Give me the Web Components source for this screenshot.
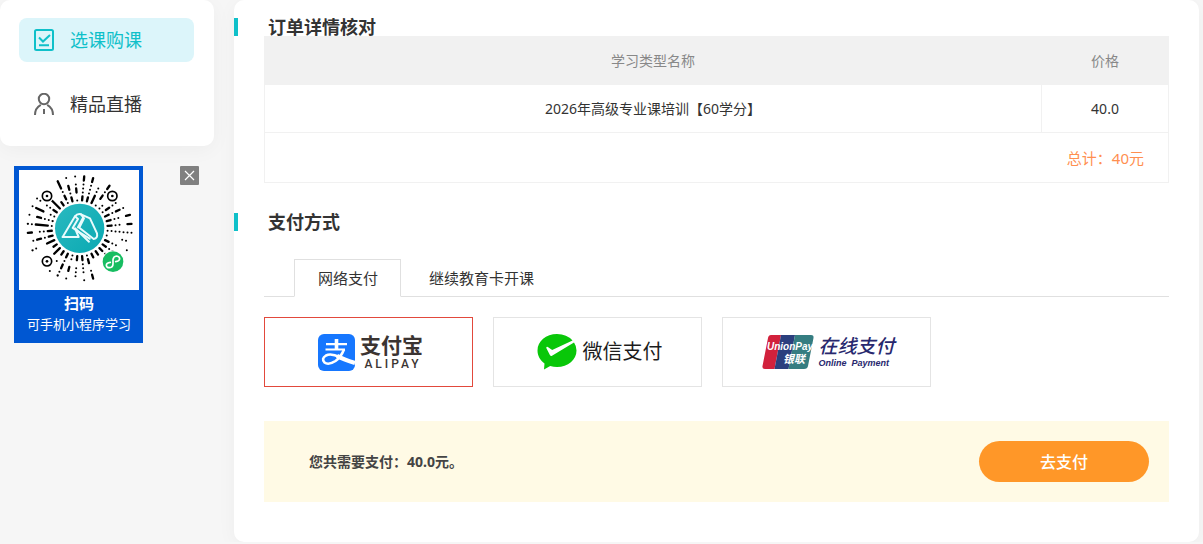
<!DOCTYPE html>
<html lang="zh-CN">
<head>
<meta charset="utf-8">
<meta name="viewport" content="width=device-width, initial-scale=1">
<title>订单详情核对</title>
<style>
  body {
    margin: 0;
    background: #f6f6f6;
    color: #333;
    font: 14px/20px "Noto Sans", "Noto Sans CJK SC", sans-serif;
    --teal: #0fc0c9;
    --line: #f1f1f1;
  }
</style>
</head>
<body>
<order-page></order-page>

<script>
const define = (name, html, setup) => {
  const template = document.createElement('template');
  template.innerHTML = html;
  customElements.define(name, class extends HTMLElement {
    constructor() {
      super();
      this.attachShadow({ mode: 'open' }).append(template.content.cloneNode(true));
    }
    connectedCallback() { if (setup) setup(this.shadowRoot, this); }
  });
};

/* Sidebar */
define('nav-item', `
<style>
  :host { display: block; }
  a { display: flex; align-items: center; gap: 16px; height: 44px; padding: 0 15px; border-radius: 8px; color: #333; font-size: 18px; text-decoration: none; }
  :host([active]) a { background: #dcf5fa; color: var(--teal); }
  ::slotted(svg) { display: block; flex: none; }
</style>
<a href="#"><slot name="icon"></slot><slot></slot></a>`);

define('side-nav', `
<style>
  :host { display: block; background: #fff; border-radius: 10px; box-shadow: 0 4px 20px rgba(0,0,0,.04); }
  nav { display: grid; gap: 20px; padding: 18px 20px 20px 19px; }
</style>
<nav><slot></slot></nav>`);

/* Mini-program code: one string per ray, clockwise from the top, seven slots outwards */
const RAYS = [
  '--...--', '--...--', '---..  ', '. --.--', '..     ',
  '.--..  ', '--.--. ', '--.. --', '--.. --', '.......',
  '.   .. ', '--..  .', '--.---.', '--.    ', '--     ',
  '--     ', '.-- .--', '--... .', '-- ... ', '.. -- .',
  '--.--.-', '-- .  .', '---    ', '--     ', '---  .-',
  '--.--. ', '--.. --', '.----.-', '-..-- .', '.. ---.',
  '--.. ..', '----.  ', '--     ', '.--.---', '--.-- .',
  '. --. .'
];

define('scan-code', `
<style>
  :host { display: block; }
  svg { display: block; width: 120px; height: 120px; }
</style>
<svg viewBox="57 45 360 360" role="img" aria-label="小程序码">
  <defs><linearGradient id="g" x1="0" y1="0" x2="1" y2="1"><stop offset="0" stop-color="#2ab9c0"/><stop offset="1" stop-color="#0aa9b2"/></linearGradient></defs>
  <rect x="57" y="45" width="360" height="360" fill="#fff"/>
  <g id="rays" stroke="#000" stroke-width="7" stroke-linecap="round"></g>
  <g fill="#fff">
    <circle cx="141" cy="123" r="20"/><circle cx="337" cy="123" r="20"/><circle cx="141" cy="319" r="20"/>
  </g>
  <g fill="#fff" stroke="#000" stroke-width="5">
    <circle cx="141" cy="123" r="14"/><circle cx="337" cy="123" r="14"/><circle cx="141" cy="319" r="14"/>
  </g>
  <circle cx="141" cy="123" r="4"/><circle cx="337" cy="123" r="4"/><circle cx="141" cy="319" r="4"/>
  <circle cx="239" cy="220" r="74" fill="url(#g)"/>
  <g fill="none" stroke="#e9fbfc" stroke-width="6" stroke-linejoin="round" stroke-linecap="round">
    <path d="M188 246L225 184Q232 175 243 178L270 190L291 235Q294 250 281 252L238 218L252 190"/>
    <path d="M188 246H236L225 220L267 260"/>
    <path d="M225 184L234 192L218 219L269 251M243 178L250 187L234 217"/>
  </g>
  <circle cx="339" cy="320" r="34" fill="#fff"/><circle cx="339" cy="320" r="31" fill="#17bd61"/>
  <path d="M331 322Q319 323 319 331Q320 339 329 338Q339 337 339 326V314Q340 304 350 303Q359 304 359 312Q358 319 347 320" fill="none" stroke="#fff" stroke-width="5" stroke-linecap="round"/>
</svg>`, root => {
  const layer = root.getElementById('rays');
  const at = (angle, slot) => {
    const r = 84 + slot * 12;
    return [239 + r * Math.sin(angle), 220 - r * Math.cos(angle)];
  };
  RAYS.forEach((ray, i) => {
    const angle = (5 + i * 10) * Math.PI / 180;
    for (const m of ray.matchAll(/\.|-+/g)) {
      const [x1, y1] = at(angle, m.index);
      const [x2, y2] = at(angle, m.index + m[0].length - 1);
      const line = document.createElementNS('http://www.w3.org/2000/svg', 'path');
      line.setAttribute('d', `M${x1} ${y1}L${x2 + 0.01} ${y2}`);
      if (m[0] === '.') line.setAttribute('stroke-width', 6);
      layer.append(line);
    }
  });
});

define('qr-card', `
<style>
  :host { display: flex; justify-content: space-between; align-items: flex-start; padding: 0 15px 0 14px; }
  figure { margin: 0; padding: 4px 4px 8px 5px; background: #0057d2; color: #fff; text-align: center; }
  figcaption { padding-top: 3px; font-size: 13px; line-height: 21px; }
  strong { display: block; font-size: 15px; }
  button { display: grid; place-items: center; width: 19px; height: 19px; padding: 0; border: 0; border-radius: 1px; background: #808080; }
</style>
<figure>
  <scan-code></scan-code>
  <figcaption><strong>扫码</strong>可手机小程序学习</figcaption>
</figure>
<button type="button" aria-label="关闭"><svg width="11" height="11" viewBox="0 0 11 11" stroke="#fff" stroke-width="1.2"><path d="M1 1l9 9M10 1l-9 9"/></svg></button>`);

/* Main panel */
define('section-title', `
<style>
  :host { display: block; border-left: 4px solid var(--teal); padding-left: 30px; }
  h2 { margin: 0; font-size: 18px; line-height: 18px; font-weight: 700; }
</style>
<h2><slot></slot></h2>`);

define('order-table', `
<style>
  :host { display: block; }
  table { width: 100%; border-collapse: collapse; table-layout: fixed; text-align: center; }
  th, td { box-sizing: border-box; padding: 0; border: 1px solid var(--line); height: 48px; }
  th { background: #f1f1f1; color: #888; font-weight: 400; }
  .price { width: 127px; }
  .total { height: 50px; padding-right: 24px; text-align: right; font-size: 15px; color: #ff8f50; }
</style>
<table>
  <thead><tr><th scope="col">学习类型名称</th><th scope="col" class="price">价格</th></tr></thead>
  <tbody><tr><td>2026年高级专业课培训【60学分】</td><td>40.0</td></tr></tbody>
  <tfoot><tr><td class="total" colspan="2">总计：40元</td></tr></tfoot>
</table>`);

define('pay-tabs', `
<style>
  :host { display: flex; padding-left: 30px; border-bottom: 1px solid #e0e0e0; }
  button { height: 37px; padding: 0 28px; border: 0; background: none; color: #333; font: inherit; font-size: 15px; }
  button[aria-selected=true] { height: 38px; margin-bottom: -1px; padding: 0 22px 0 23px; border: 1px solid #e0e0e0; border-bottom-color: #fff; background: #fff; }
</style>
<button type="button" role="tab" aria-selected="true">网络支付</button>
<button type="button" role="tab" aria-selected="false">继续教育卡开课</button>`,
(root, host) => host.setAttribute('role', 'tablist'));

define('alipay-logo', `
<style>
  :host { display: flex; align-items: center; gap: 5px; color: #3b3432; }
  svg { display: block; }
  span, small { display: block; text-align: center; }
  span { font-size: 21px; line-height: 24px; font-weight: 700; }
  small { padding-left: 3px; font: 500 12px/14px Roboto, sans-serif; letter-spacing: 3px; }
</style>
<svg width="37" height="37" viewBox="0 0 37 37" aria-hidden="true">
  <rect width="37" height="37" rx="6" fill="#1677ff"/>
  <g fill="none" stroke="#fff">
    <path d="M8 10.200H29M7.500 15.500H27" stroke-width="2.200"/>
    <path d="M18.500 5V15" stroke-width="3.600"/>
    <path d="M26 15.500Q23 23 17.500 27Q10.500 31.500 6.500 28.500Q3 24.500 8 21.500Q13 19 22 23.200" stroke-width="2.600"/>
    <path d="M19 21.800Q26 25.500 37 29" stroke-width="4.200"/>
  </g>
</svg>
<div><span>支付宝</span><small>ALIPAY</small></div>`);

define('wechat-logo', `
<style>
  :host { display: flex; align-items: center; gap: 6px; color: #1c1c1c; font-size: 20px; }
  svg { display: block; }
</style>
<svg width="40" height="36" viewBox="0 0 40 36" aria-hidden="true">
  <path d="M20 0C9 0 .5 7.200.5 16.500c0 5.500 3 10 7 13L7 35.500l6.200-3.500q3.300 1 6.800 1c11 0 19.500-7.200 19.500-16.500q0-4.500-2.500-8L15 21.800q-1.200.6-2-.5L9.300 14q0-1.700 1.500-1l4.400 3L35.500 6.600Q30 0 20 0Z" fill="#09c709"/>
</svg>
<span>微信支付</span>`);

define('unionpay-logo', `
<style>
  :host { display: flex; align-items: center; gap: 4px; color: #28286e; }
  svg { display: block; }
  span, small { display: block; font-style: italic; }
  span { font-size: 19px; line-height: 22px; font-weight: 500; }
  small { font: italic 700 9px/13px "Liberation Sans", sans-serif; }
</style>
<svg width="52" height="34" viewBox="0 0 52 34" role="img" aria-label="UnionPay">
  <clipPath id="c"><path d="M9 0H49Q52 0 51.500 3L46 31Q45.500 34 42 34H3Q0 34 .5 31L6 3Q6.500 0 9 0Z"/></clipPath>
  <g clip-path="url(#c)">
    <path d="M0 0H19L12.500 34H0Z" fill="#d2213c"/><path d="M19 0H33L26.500 34H12.500Z" fill="#2b3f7e"/><path d="M33 0H52V34H26.500Z" fill="#357d81"/>
  </g>
  <g fill="#fff" font-weight="700" font-style="italic">
    <text x="5" y="15" font-size="10" font-family="Liberation Sans, sans-serif">UnionPay</text>
    <text x="21" y="28" font-size="11" font-family="Noto Sans CJK SC, sans-serif">银联</text>
  </g>
</svg>
<div><span>在线支付</span><small>Online&nbsp; Payment</small></div>`);

define('pay-methods', `
<style>
  :host { display: block; }
  fieldset { display: flex; flex-wrap: wrap; gap: 20px; margin: 0; padding: 0; border: 0; min-width: 0; }
  label { position: relative; display: grid; place-items: center; box-sizing: border-box; width: 209px; height: 70px; padding-left: 4px; border: 1px solid #e4e4e4; background: #fff; }
  label:has(:checked) { border-color: #e2493c; }
  input { position: absolute; inset: 0; width: 100%; height: 100%; margin: 0; opacity: 0; }
</style>
<fieldset aria-label="支付方式">
  <label><input type="radio" name="method" checked><alipay-logo></alipay-logo></label>
  <label><input type="radio" name="method"><wechat-logo></wechat-logo></label>
  <label><input type="radio" name="method"><unionpay-logo></unionpay-logo></label>
</fieldset>`);

define('pay-bar', `
<style>
  :host { display: flex; align-items: center; justify-content: space-between; padding: 20px 20px 20px 45px; background: #fffae5; color: #444; font-weight: 700; }
  button { width: 170px; height: 41px; border: 0; border-radius: 21px; background: #ff9728; color: #fff; font: inherit; font-size: 16px; font-weight: 500; }
</style>
<span><slot></slot></span>
<button type="button">去支付</button>`);

define('order-page', `
<style>
  :host { display: flex; align-items: flex-start; gap: 20px; padding-right: 4px; }
  aside { flex: none; display: grid; gap: 20px; width: 214px; }
  main { flex: 1; min-width: 0; padding: 18px 0 40px; border-radius: 10px; background: #fff; box-shadow: 0 4px 20px rgba(0,0,0,.04); }
  .body { padding: 0 30px 30px; }
  .body:last-child { padding-top: 28px; padding-bottom: 0; }
  pay-methods { margin: 20px 0 34px; }
</style>
<aside>
  <side-nav>
    <nav-item active>
      <svg slot="icon" width="20" height="22" viewBox="0 0 20 22" fill="none" stroke="currentColor" stroke-width="2"><rect x="1" y="1" width="18" height="20" rx="1.500"/><path d="M5 8.500L9 12.500L16 6M5 16.200H15"/></svg>选课购课</nav-item>
    <nav-item>
      <svg slot="icon" width="20" height="22" viewBox="0 0 20 22" fill="none" stroke="#666" stroke-width="2"><circle cx="10" cy="6" r="5.200"/><path d="M1 22Q1 15 6.800 11.800M19 22Q19 15 13.200 11.800M10 16V21"/></svg>精品直播</nav-item>
  </side-nav>
  <qr-card></qr-card>
</aside>
<main>
  <section-title>订单详情核对</section-title>
  <div class="body"><order-table></order-table></div>
  <section-title>支付方式</section-title>
  <div class="body">
    <pay-tabs></pay-tabs>
    <pay-methods></pay-methods>
    <pay-bar>您共需要支付：40.0元。</pay-bar>
  </div>
</main>`);
</script>
</body>
</html>
